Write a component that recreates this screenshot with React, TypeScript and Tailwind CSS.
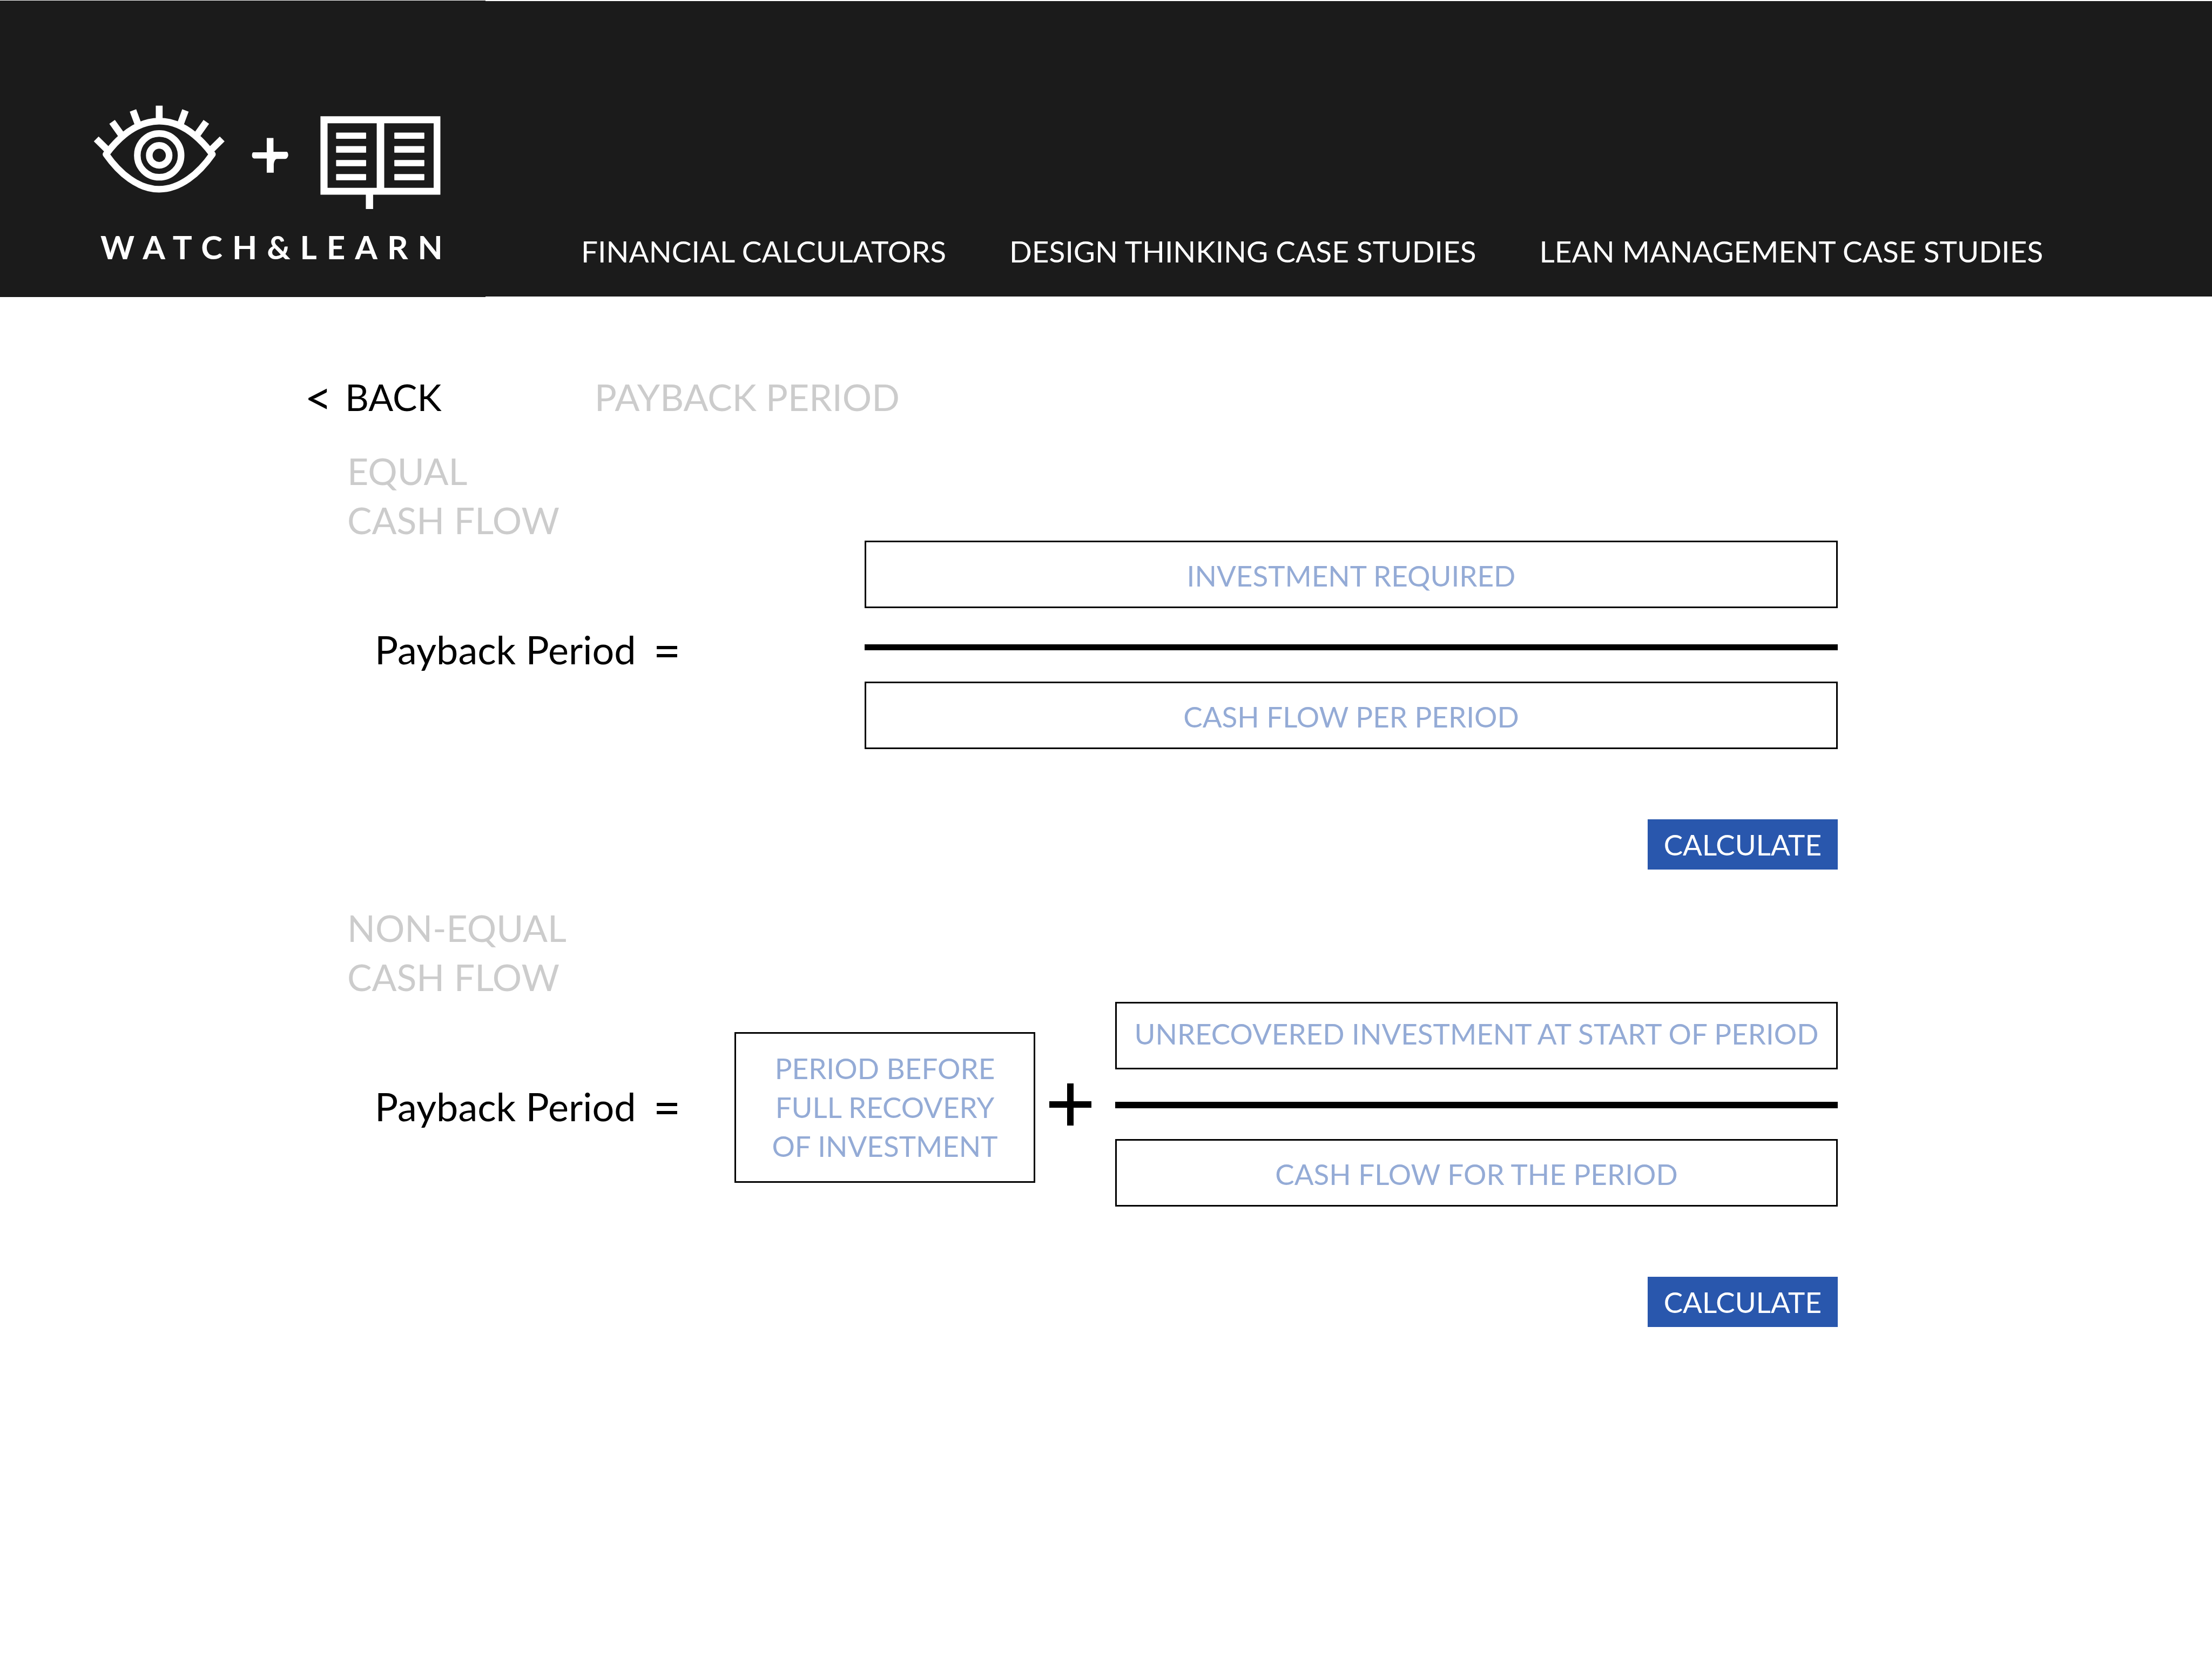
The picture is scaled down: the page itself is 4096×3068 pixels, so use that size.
import React from "react";

const navLinks = [
  "FINANCIAL CALCULATORS",
  "DESIGN THINKING CASE STUDIES",
  "LEAN MANAGEMENT CASE STUDIES",
];

function LogoMark() {
  const rows = [
    { y: 85, h: 12 },
    { y: 111, h: 13 },
    { y: 138, h: 12 },
    { y: 165, h: 12 },
  ];
  return (
    <svg viewBox="0 0 750 240" className="block h-[230px] w-[720px]" fill="none" aria-hidden="true">
      {/* eye */}
      <g stroke="#ffffff" strokeWidth="12.8" strokeLinejoin="round">
        <path d="M54 127 C84 87 118 63 156.7 63 C195.4 63 229.4 87 259.4 127 C233.4 164 197.4 194.5 156.7 194.5 C116 194.5 80 164 54 127 Z" />
        <circle cx="156.7" cy="129" r="42.3" />
        <circle cx="156.7" cy="129" r="19.2" />
      </g>
      <g stroke="#ffffff" strokeWidth="13.2">
        <path d="M156.7 33 V62" />
        <path d="M106 42.3 L115.5 68" />
        <path d="M207.4 42.3 L197.9 68" />
        <path d="M65.7 64.3 L84 90" />
        <path d="M247.7 64.3 L229.4 90" />
        <path d="M35 97.3 L57 119" />
        <path d="M278.4 97.3 L256.4 119" />
      </g>
      {/* plus */}
      <path
        fill="#ffffff"
        d="M364.5 95.5 H377.5 V122 H403 Q406 123 406 129 Q405 135 400 136 H384 Q379 137 378 146 V162.5 H364.5 V135 H340 Q336 134 336 129 Q336 123 339 123 H364.5 Z"
      />
      {/* book */}
      <path
        fill="#ffffff"
        fillRule="evenodd"
        d="M468.3 53.5 H700 V205 H570 V232.7 H556 V205 H468.3 Z M482 67 V191.7 H577 V67 Z M591.5 67 V191.7 H687 V67 Z"
      />
      <g fill="#ffffff">
        {rows.map((r) => (
          <React.Fragment key={r.y}>
            <rect x="498.5" y={r.y} width="58" height={r.h} rx="1" />
            <rect x="611" y={r.y} width="58" height={r.h} rx="1" />
          </React.Fragment>
        ))}
      </g>
    </svg>
  );
}

function Header() {
  return (
    <header className="flex items-start pt-px text-white">
      <a href="#home" aria-label="WATCH&LEARN" className="block h-[549px] w-[899px] shrink-0 bg-[#1b1b1b] pt-[163px] pl-[144px]">
        <LogoMark />
        <span className="mt-[33px] ml-[42px] block text-[60px] leading-[60px] font-bold tracking-[0.3em]">
          WATCH&amp;LEARN
        </span>
      </a>
      <nav className="mt-px flex h-[547px] flex-1 items-end gap-[117px] bg-[#1b1b1b] pb-[50px] pl-[177px] text-[55px] leading-[67px] whitespace-nowrap">
        {navLinks.map((label) => (
          <a key={label} href="#">
            {label}
          </a>
        ))}
      </nav>
    </header>
  );
}

function Field({ label, raised = false }: { label: string; raised?: boolean }) {
  return (
    <input
      type="text"
      aria-label={label}
      placeholder={label}
      className={
        "block h-[125px] w-full border-[3px] border-black bg-white text-center text-[53px] text-black outline-none placeholder:text-[#94abd6] placeholder:opacity-100 " +
        (raised ? "pb-[8px]" : "pt-[4px]")
      }
    />
  );
}

function CalculateButton() {
  return (
    <button type="button" className="mt-[130px] bg-[#2957ad] px-[30px] text-[53px] leading-[93px] text-white">
      CALCULATE
    </button>
  );
}

function Intro({ title }: { title: string }) {
  return (
    <div>
      <h2 className="text-[68px] leading-[91px] text-[#cccccc]">
        {title}
        <br />
        CASH FLOW
      </h2>
      <p className="mt-[149px] ml-[51px] flex items-center gap-[32px] text-[72px] leading-[91px] whitespace-nowrap">
        <span>Payback Period</span>
        <span className="text-[88px]">=</span>
      </p>
    </div>
  );
}

export default function App() {
  return (
    <div className="min-h-screen bg-white font-['Lato',sans-serif] text-black">
      <Header />
      <main className="pt-[139px] pr-[693px] pb-[120px] pl-[643px]">
        <div className="flex text-[68px] leading-[91px]">
          <a href="#" className="-ml-[79px] flex w-[537px] items-center gap-[24px]">
            <span className="text-[88px]">&lt;</span>
            <span>BACK</span>
          </a>
          <h1 className="text-[#cccccc]">PAYBACK PERIOD</h1>
        </div>

        <form className="mt-[46px] flex">
          <div className="w-[958px] shrink-0">
            <Intro title="EQUAL" />
          </div>
          <div className="flex flex-1 flex-col items-end pt-[175px]">
            <Field label="INVESTMENT REQUIRED" />
            <hr className="mt-[67px] mb-[58px] h-[11px] w-full border-0 bg-black" />
            <Field label="CASH FLOW PER PERIOD" />
            <CalculateButton />
          </div>
        </form>

        <form className="mt-[62px] flex">
          <div className="w-[717px] shrink-0">
            <Intro title="NON-EQUAL" />
          </div>
          <div className="flex flex-1 flex-col items-end pt-[183px]">
            <div className="flex w-full items-start">
              <textarea
                aria-label="PERIOD BEFORE FULL RECOVERY OF INVESTMENT"
                placeholder={"PERIOD BEFORE\nFULL RECOVERY\nOF INVESTMENT"}
                className="mt-[56px] block h-[279px] w-[557px] shrink-0 resize-none overflow-hidden border-[3px] border-black bg-white pt-[28px] text-center text-[53px] leading-[72px] outline-none placeholder:text-[#94abd6] placeholder:opacity-100"
              />
              <svg viewBox="0 0 78 78" className="mr-[44px] ml-[26px] h-[78px] w-[78px] shrink-0 self-center" aria-hidden="true">
                <path d="M39 0 V78 M0 39 H78" stroke="#000000" strokeWidth="12" />
              </svg>
              <div className="flex-1">
                <Field label="UNRECOVERED INVESTMENT AT START OF PERIOD" raised />
                <hr className="mt-[60px] mb-[57px] h-[12px] w-full border-0 bg-black" />
                <Field label="CASH FLOW FOR THE PERIOD" />
              </div>
            </div>
            <CalculateButton />
          </div>
        </form>
      </main>
    </div>
  );
}
